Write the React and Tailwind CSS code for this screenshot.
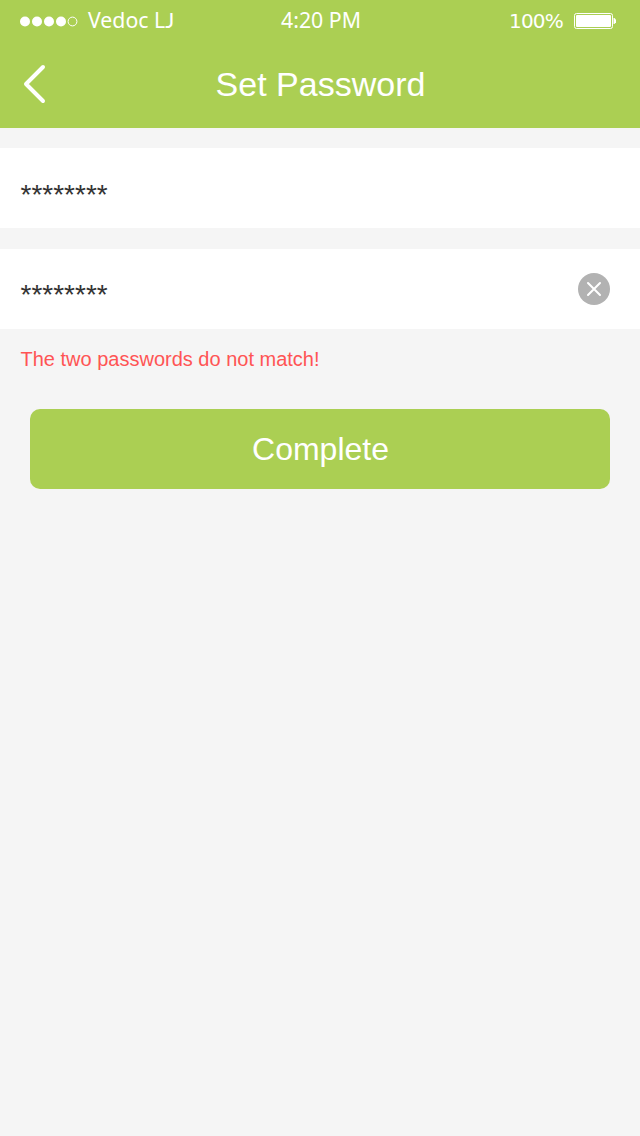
function StatusBar() {
  return (
    <div className="grid h-10 grid-cols-3 items-center pl-5 pr-[23px] font-['Noto_Sans',sans-serif] text-[22px] leading-10">
      <div className="flex items-center">
        <svg width="58" height="12" viewBox="0 0 58 12" fill="#fff">
          <circle cx="5" cy="6.5" r="5" />
          <circle cx="17" cy="6.5" r="5" />
          <circle cx="29" cy="6.5" r="5" />
          <circle cx="41" cy="6.5" r="5" />
          <circle cx="52.5" cy="6.5" r="4.4" fill="none" stroke="#fff" strokeWidth="1" />
        </svg>
        <span className="mb-0.5 ml-2.5 h-10 whitespace-nowrap text-[21.3px]">
          Vedoc L<span className="font-['Lato',sans-serif]">J</span>
        </span>
      </div>
      <span className="mb-0.5 pl-[5px] text-center text-[21.3px]">4:20 PM</span>
      <div className="flex items-center justify-end">
        <span className="mr-[11px] font-['DejaVu_Sans',sans-serif] text-[20px] tracking-[-0.8px]">100%</span>
        <svg width="43" height="16" viewBox="0 0 43 16">
          <rect x="0.5" y="0.5" width="38" height="15" rx="2" fill="none" stroke="#fff" />
          <rect x="2" y="2" width="35" height="12" rx="1" fill="#fff" />
          <path d="M39.5 5h1l1.5 1.7v2.6L40.5 11h-1z" fill="#fff" />
        </svg>
      </div>
    </div>
  );
}

function PasswordRow({ clearable }) {
  return (
    <div className="flex h-20 items-center justify-between bg-white pl-[20.5px] pr-[30px]">
      <span className={clearable ? "pt-3 text-[28px] text-[#333]" : "pt-3.5 text-[28px] text-[#333]"}>********</span>
      {clearable && (
        <button aria-label="Clear">
          <svg width="32" height="32" viewBox="0 0 32 32">
            <circle cx="16" cy="16" r="16" fill="#b2b2b2" />
            <path d="M10 10l12 12M22 10L10 22" stroke="#fff" strokeWidth="2" strokeLinecap="round" />
          </svg>
        </button>
      )}
    </div>
  );
}

export default function App() {
  return (
    <div className="flex min-h-screen w-[640px] flex-col bg-[#f5f5f5] font-['Liberation_Sans',Arial,sans-serif]">
      <header className="h-32 bg-[#abcf53] text-white">
        <StatusBar />
        <div className="grid h-[88px] grid-cols-[80px_1fr_80px] items-center">
          <button aria-label="Back" className="pl-[22px]">
            <svg width="26" height="42" viewBox="0 0 26 42" fill="none" stroke="#fff" strokeWidth="4" strokeLinecap="round" strokeLinejoin="round">
              <path d="M21 4L4 21l17 17" />
            </svg>
          </button>
          <h1 className="pl-px text-center text-[34px]">Set Password</h1>
        </div>
      </header>
      <main className="flex flex-col pt-5">
        <PasswordRow />
        <div className="h-[21px]" />
        <PasswordRow clearable />
        <p className="h-20 px-[20.5px] pt-[15px] text-[20px] leading-[30px] text-[#ff5454]">The two passwords do not match!</p>
        <button className="mx-[30px] h-20 rounded-[10px] bg-[#abcf53] pl-px text-[32px] text-white">Complete</button>
      </main>
    </div>
  );
}
